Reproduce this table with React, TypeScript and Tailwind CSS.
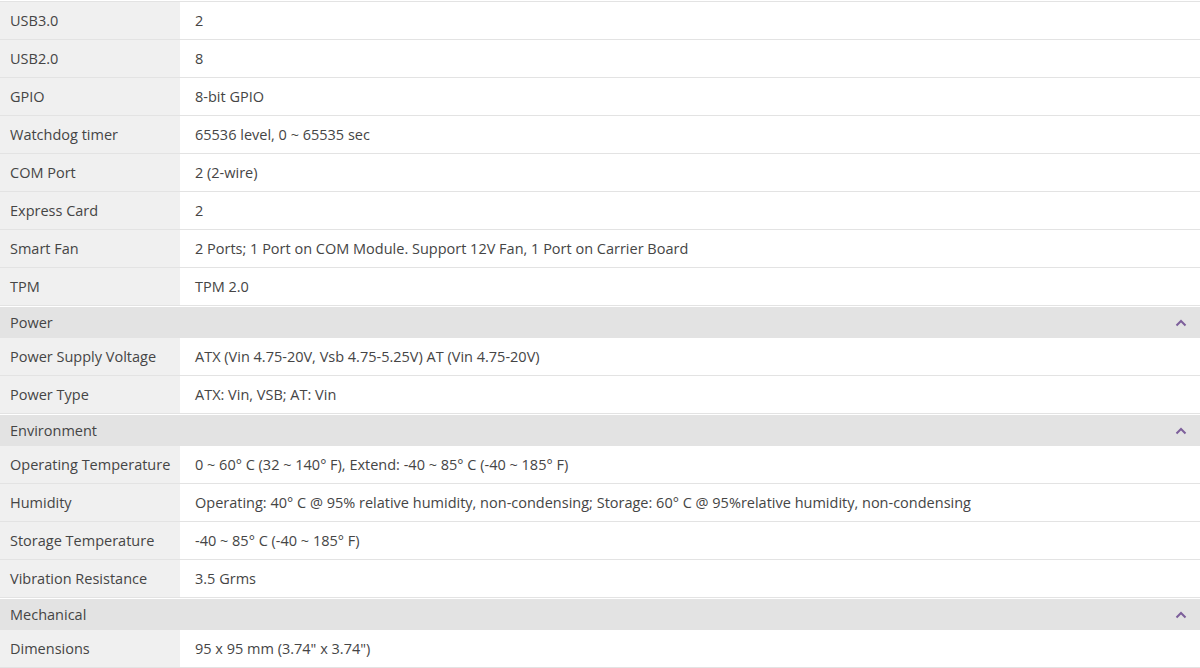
import React from "react";

type Row = [string, string];
type Section = { title?: string; rows: Row[] };

const sections: Section[] = [
  {
    rows: [
      ["USB3.0", "2"],
      ["USB2.0", "8"],
      ["GPIO", "8-bit GPIO"],
      ["Watchdog timer", "65536 level, 0 ~ 65535 sec"],
      ["COM Port", "2 (2-wire)"],
      ["Express Card", "2"],
      ["Smart Fan", "2 Ports; 1 Port on COM Module. Support 12V Fan, 1 Port on Carrier Board"],
      ["TPM", "TPM 2.0"],
    ],
  },
  {
    title: "Power",
    rows: [
      ["Power Supply Voltage", "ATX (Vin 4.75-20V, Vsb 4.75-5.25V) AT (Vin 4.75-20V)"],
      ["Power Type", "ATX: Vin, VSB; AT: Vin"],
    ],
  },
  {
    title: "Environment",
    rows: [
      ["Operating Temperature", "0 ~ 60° C (32 ~ 140° F), Extend: -40 ~ 85° C (-40 ~ 185° F)"],
      [
        "Humidity",
        "Operating: 40° C @ 95% relative humidity, non-condensing; Storage: 60° C @ 95%relative humidity, non-condensing",
      ],
      ["Storage Temperature", "-40 ~ 85° C (-40 ~ 185° F)"],
      ["Vibration Resistance", "3.5 Grms"],
    ],
  },
  {
    title: "Mechanical",
    rows: [["Dimensions", "95 x 95 mm (3.74\" x 3.74\")"]],
  },
];

function Chevron() {
  return (
    <svg width="12" height="8" viewBox="0 0 12 8" fill="none">
      <path d="M1.5 6.5 L6 2 L10.5 6.5" stroke="#7d5f9b" strokeWidth="2" />
    </svg>
  );
}

export default function App() {
  return (
    <div
      className="w-[1200px] h-[668px] overflow-hidden bg-white pt-[1px] text-[14.5px] text-[#454545]"
      style={{ fontFamily: '"Open Sans", "Noto Sans", sans-serif' }}
    >
      {sections.map((s, i) => (
        <div key={i}>
          {s.title && (
            <div className="mt-[1px] h-[31px] bg-[#e3e3e3] flex items-center justify-between pl-[10px] pr-[13px]">
              <span>{s.title}</span>
              <Chevron />
            </div>
          )}
          <div className={i === 0 ? "border-t border-[#e3e3e3]" : ""}>
            {s.rows.map(([k, v], j) => (
              <div key={j} className="flex h-[38px] border-b border-[#e3e3e3]">
                <div className="w-[180px] shrink-0 bg-[#f0f0f0] flex items-center pl-[10px] whitespace-nowrap">{k}</div>
                <div className="flex-1 flex items-center pl-[15px] whitespace-nowrap">{v}</div>
              </div>
            ))}
          </div>
        </div>
      ))}
    </div>
  );
}
